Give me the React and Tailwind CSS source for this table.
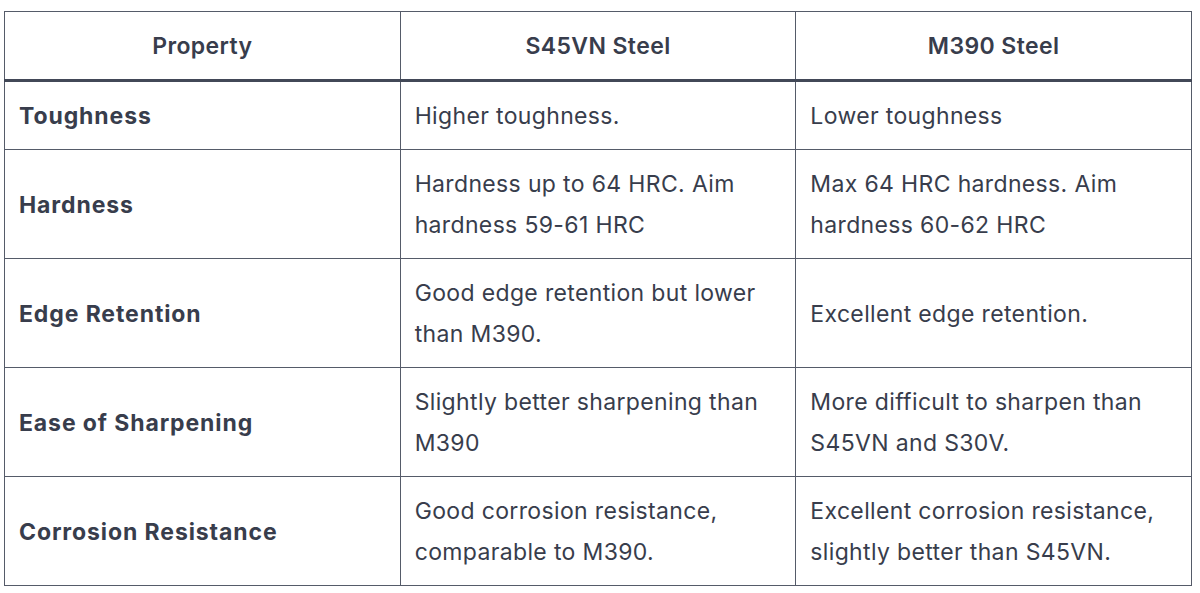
import React from 'react';

const rows = [
  { prop: 'Toughness', a: 'Higher toughness.', b: 'Lower toughness' },
  { prop: 'Hardness', a: 'Hardness up to 64 HRC. Aim hardness 59-61 HRC', b: 'Max 64 HRC hardness. Aim hardness 60-62 HRC' },
  { prop: 'Edge Retention', a: 'Good edge retention but lower than M390.', b: 'Excellent edge retention.' },
  { prop: 'Ease of Sharpening', a: 'Slightly better sharpening than M390', b: 'More difficult to sharpen than S45VN and S30V.' },
  { prop: 'Corrosion Resistance', a: 'Good corrosion resistance, comparable to M390.', b: 'Excellent corrosion resistance, slightly better than S45VN.' },
];

const App = () => {
  return (
    <div className="min-h-screen bg-white pt-[11px] pl-[4px] pr-[8px]" style={{ fontFamily: 'Inter, "Noto Sans", sans-serif' }}>
      <table className="w-[1188px] table-fixed border-collapse text-[23px] leading-[41px] tracking-[0.35px] text-[#383d4c]">
        <thead>
          <tr className="border-b-[3px] border-[#424857]">
            <th className="w-1/3 border border-[#555b69] px-[14px] pt-[14px] pb-[12px] text-center font-semibold tracking-[0.4px]">Property</th>
            <th className="w-1/3 border border-[#555b69] px-[14px] pt-[14px] pb-[12px] text-center font-semibold tracking-[0.4px]">S45VN Steel</th>
            <th className="w-1/3 border border-[#555b69] px-[14px] pt-[14px] pb-[12px] text-center font-semibold tracking-[0.4px]">M390 Steel</th>
          </tr>
        </thead>
        <tbody>
          {rows.map((r) => (
            <tr key={r.prop}>
              <td className="border border-[#555b69] px-[14px] pt-[14px] pb-[12px] font-bold tracking-[0.9px]">{r.prop}</td>
              <td className="border border-[#555b69] px-[14px] pt-[14px] pb-[12px]">{r.a}</td>
              <td className="border border-[#555b69] px-[14px] pt-[14px] pb-[12px]">{r.b}</td>
            </tr>
          ))}
        </tbody>
      </table>
    </div>
  );
};

export default App;
